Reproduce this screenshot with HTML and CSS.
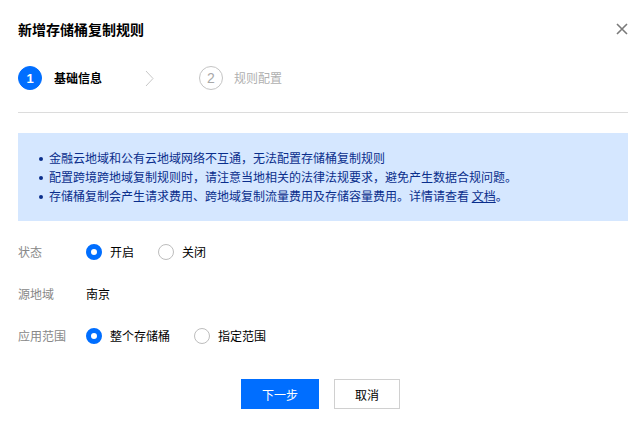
FILE: index.html
```html
<!DOCTYPE html>
<html lang="zh-CN">
<head>
<meta charset="utf-8">
<title>新增存储桶复制规则</title>
<link rel="stylesheet" href="styles.css">
</head>
<body>
<div class="dialog">
  <div class="header">
    <h1 class="title">新增存储桶复制规则</h1>
    <svg class="close" width="12" height="12" viewBox="0 0 12 12"><path d="M1 1L11 11M11 1L1 11" stroke="#7a7a7a" stroke-width="1.6" fill="none"/></svg>
  </div>
  <div class="steps">
    <div class="step active"><span class="num">1</span><span class="label">基础信息</span></div>
    <svg class="chev" width="9" height="17" viewBox="0 0 9 17"><path d="M1 1L8 8.5L1 16" stroke="#c8c8c8" stroke-width="1" fill="none"/></svg>
    <div class="step"><span class="num">2</span><span class="label">规则配置</span></div>
  </div>
  <div class="divider"></div>
  <ul class="alert">
    <li><span class="dot"></span>金融云地域和公有云地域网络不互通，无法配置存储桶复制规则</li>
    <li><span class="dot"></span>配置跨境跨地域复制规则时，请注意当地相关的法律法规要求，避免产生数据合规问题。</li>
    <li><span class="dot"></span>存储桶复制会产生请求费用、跨地域复制流量费用及存储容量费用。详情请查看 <a class="link">文档</a>。</li>
  </ul>
  <div class="form">
    <div class="row">
      <div class="lbl">状态</div>
      <div class="ctrl">
        <label class="radio"><span class="ring checked"></span>开启</label>
        <label class="radio"><span class="ring"></span>关闭</label>
      </div>
    </div>
    <div class="row">
      <div class="lbl">源地域</div>
      <div class="ctrl">南京</div>
    </div>
    <div class="row">
      <div class="lbl">应用范围</div>
      <div class="ctrl">
        <label class="radio"><span class="ring checked"></span>整个存储桶</label>
        <label class="radio"><span class="ring"></span>指定范围</label>
      </div>
    </div>
  </div>
  <div class="footer">
    <button class="btn primary">下一步</button>
    <button class="btn">取消</button>
  </div>
</div>
</body>
</html>
```
FILE: styles.css
```css
* { box-sizing: border-box; }
body {
  margin: 0;
  background: #fff;
  font-family: "Noto Sans CJK SC", "Noto Sans", sans-serif;
  font-size: 12px;
  color: #000;
}
.dialog {
  padding: 19px 15px 0 18px;
}
.header {
  display: flex;
  justify-content: space-between;
  align-items: center;
  height: 20px;
}
.title {
  margin: 0;
  font-size: 14px;
  font-weight: 700;
  line-height: 20px;
}
.close { display: block; }
.steps {
  display: flex;
  align-items: center;
  margin-top: 27px;
  height: 24px;
}
.step {
  display: flex;
  align-items: center;
  gap: 12px;
}
.num {
  width: 24px;
  height: 24px;
  border-radius: 50%;
  border: 1px solid #c4c4c4;
  color: #a8a8a8;
  display: flex;
  align-items: center;
  justify-content: center;
  font-family: "Liberation Sans", sans-serif;
  font-size: 14px;
  line-height: 1;
}
.step .label { color: #b0b0b0; font-size: 12px; line-height: 20px; }
.step + .chev + .step { gap: 11px; }
.step.active .num {
  background: #006eff;
  border-color: #006eff;
  color: #fff;
  font-weight: 700;
  font-size: 13px;
}
.step.active .label { color: #000; font-weight: 700; }
.step.active + .chev { margin-left: 43px; margin-right: 45px; }
.chev { display: block; }
.divider {
  height: 1px;
  background: #dcdcdc;
  margin-top: 22px;
}
.alert {
  list-style: none;
  margin: 20px 0 0 0;
  padding: 15px 0 15px 21px;
  background: #d5e7ff;
  color: #0a2e8c;
  line-height: 19px;
  height: 88px;
}
.alert li { display: block; white-space: nowrap; }
.dot {
  display: inline-block;
  width: 4px;
  height: 4px;
  border-radius: 50%;
  background: #0a2e8c;
  margin-right: 6px;
  vertical-align: middle;
  position: relative;
  top: -1px;
}
.link { color: #0a2e8c; text-decoration: underline; }
.form {
  margin-top: 20px;
  display: flex;
  flex-direction: column;
  gap: 21px;
}
.row {
  display: flex;
  align-items: center;
  height: 21px;
  line-height: 21px;
}
.lbl { width: 68px; color: #888; }
.ctrl { display: flex; align-items: center; gap: 24px; color: #000; }
.radio { display: flex; align-items: center; gap: 8px; }
.ring {
  width: 16px;
  height: 16px;
  border-radius: 50%;
  border: 1px solid #bdbdbd;
  background: #fff;
}
.ring.checked { border: 5px solid #006eff; }
.footer {
  margin-top: 33px;
  display: flex;
  justify-content: center;
  gap: 15px;
  padding-right: 5px;
}
.btn {
  height: 30px;
  width: 66px;
  border: 1px solid #d0d0d0;
  background: #fff;
  color: #000;
  font-family: inherit;
  font-size: 12px;
  padding: 0;
  margin: 0;
}
.btn.primary {
  width: 78px;
  background: #006eff;
  border-color: #006eff;
  color: #fff;
}
```
